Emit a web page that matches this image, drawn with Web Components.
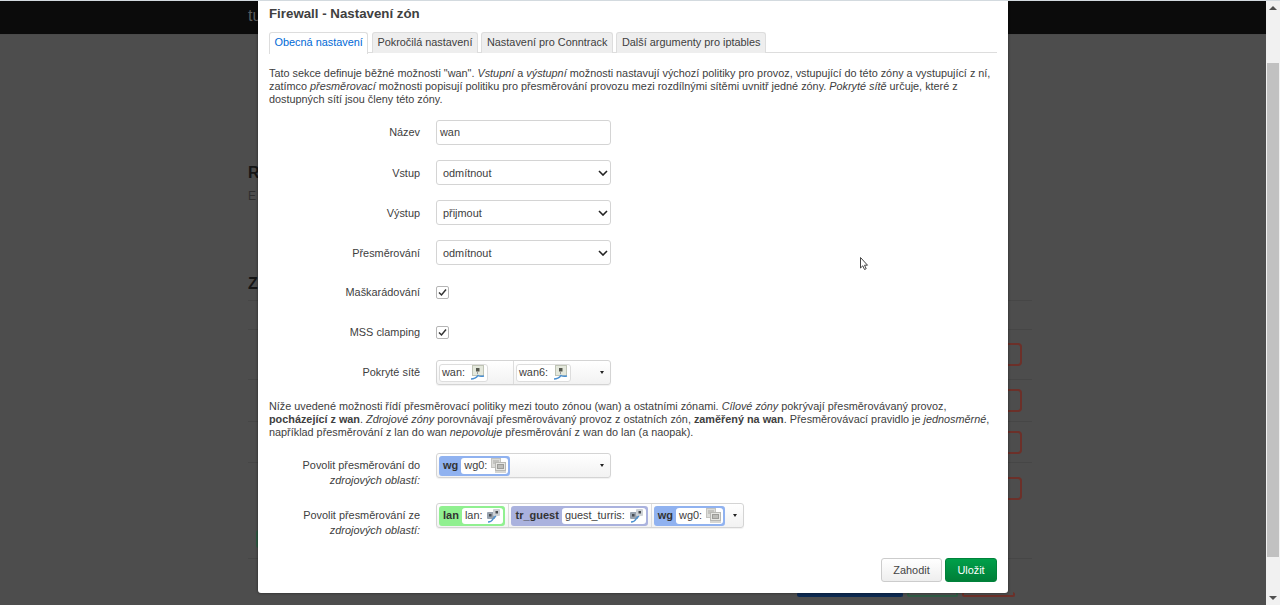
<!DOCTYPE html>
<html lang="cs">
<head>
<meta charset="utf-8">
<title>Firewall - Nastavení zón</title>
<style>
  html, body { margin: 0; height: 100%; overflow: hidden; }
  body { font-family: "Liberation Sans", Arial, sans-serif; font-size: 11px; color: #404040; }
</style>
</head>
<body>
<template id="net-icons">
  <svg id="wan" width="15" height="15" viewBox="0 0 15 15">
    <rect x="2.500" y="0.500" width="11" height="10" fill="#e4e8dc" stroke="#c0c4b6"/>
    <rect x="6" y="3" width="3.500" height="3.500" fill="#55584e"/>
    <path d="M7.500 6.500v2.500" stroke="#999" fill="none"/>
    <path d="M1 14c3 0 5-1 7-3.500 1.500 1 3.500 1 6 .5" stroke="#4b90d0" stroke-width="1.400" fill="none"/>
  </svg>
  <svg id="switch" width="15" height="15" viewBox="0 0 15 15">
    <rect x="1" y="4" width="8" height="7" rx="1" fill="#98a2ae"/>
    <rect x="7" y="1" width="7" height="7" rx="1" fill="#cdd1d5"/>
    <rect x="3" y="6" width="2.500" height="2.500" fill="#4a4e54"/>
    <rect x="9.500" y="3" width="2.500" height="2.500" fill="#4a4e54"/>
    <path d="M2 14c2 0 4-1 5-3l3-3" stroke="#4b90d0" stroke-width="1.400" fill="none"/>
  </svg>
  <svg id="bridge" width="15" height="15" viewBox="0 0 15 15">
    <rect x="0.500" y="0.500" width="9" height="9" fill="#dcdcd9" stroke="#c4c4c0"/>
    <path d="M2 3h6M2 5h6" stroke="#aaaaa6"/>
    <rect x="4.500" y="4.500" width="10" height="8" fill="#e6e6e3" stroke="#b8b8b4"/>
    <rect x="6.500" y="6.500" width="6" height="4" fill="#bcbcb8" stroke="#9c9c98"/>
    <path d="M4 14h11" stroke="#c4c4c0" stroke-width="1.400"/>
  </svg>
</template>

<fw-app>
  <fw-backdrop></fw-backdrop>
  <fw-modal heading="Firewall - Nastavení zón">
    <fw-tabs></fw-tabs>
    <fw-note>Tato sekce definuje běžné možnosti "wan". <em>Vstupní</em> a <em>výstupní</em> možnosti nastavují výchozí politiky pro provoz, vstupující do této zóny a vystupující z ní,<br>zatímco <em>přesměrovací</em> možnosti popisují politiku pro přesměrování provozu mezi rozdílnými sítěmi uvnitř jedné zóny. <em>Pokryté sítě</em> určuje, které z<br>dostupných sítí jsou členy této zóny.</fw-note>
    <fw-row label="Název"><fw-input value="wan"></fw-input></fw-row>
    <fw-row label="Vstup" class="sel"><fw-select value="odmítnout"></fw-select></fw-row>
    <fw-row label="Výstup" class="sel"><fw-select value="přijmout"></fw-select></fw-row>
    <fw-row label="Přesměrování" class="sel"><fw-select value="odmítnout"></fw-select></fw-row>
    <fw-row label="Maškarádování"><fw-check></fw-check></fw-row>
    <fw-row label="MSS clamping"><fw-check></fw-check></fw-row>
    <fw-row label="Pokryté sítě">
      <fw-drop>
        <fw-cell width="72"><fw-net name="wan:" icon="wan"></fw-net></fw-cell>
        <fw-cell><fw-net name="wan6:" icon="wan"></fw-net></fw-cell>
      </fw-drop>
    </fw-row>
    <fw-note class="second">Níže uvedené možnosti řídí přesměrovací politiky mezi touto zónou (wan) a ostatními zónami. <em>Cílové zóny</em> pokrývají přesměrovávaný provoz,<br><strong>pocházející z wan</strong>. <em>Zdrojové zóny</em> porovnávají přesměrovávaný provoz z ostatních zón, <strong>zaměřený na wan</strong>. Přesměrovávací pravidlo je <em>jednosměrné</em>,<br>například přesměrování z lan do wan <em>nepovoluje</em> přesměrování z wan do lan (a naopak).</fw-note>
    <fw-row label="Povolit přesměrování do" sub="zdrojových oblastí:" class="zone-first">
      <fw-drop>
        <fw-cell><fw-zone name="wg" color="#90b2f0"><fw-net name="wg0:" icon="bridge"></fw-net></fw-zone></fw-cell>
      </fw-drop>
    </fw-row>
    <fw-row label="Povolit přesměrování ze" sub="zdrojových oblastí:" class="zone-second">
      <fw-drop auto>
        <fw-cell sep><fw-zone name="lan" color="#90f090"><fw-net name="lan:" icon="switch"></fw-net></fw-zone></fw-cell>
        <fw-cell sep><fw-zone name="tr_guest" color="#aab2de"><fw-net name="guest_turris:" icon="switch"></fw-net></fw-zone></fw-cell>
        <fw-cell><fw-zone name="wg" color="#90b2f0"><fw-net name="wg0:" icon="bridge"></fw-net></fw-zone></fw-cell>
      </fw-drop>
    </fw-row>
    <fw-actions slot="footer"></fw-actions>
  </fw-modal>
  <fw-scrollbar></fw-scrollbar>
  <fw-cursor></fw-cursor>
</fw-app>

<script>
function shadow(el, html) {
  const root = el.attachShadow({ mode: 'open' });
  root.innerHTML = html;
  return root;
}

class FwApp extends HTMLElement {
  constructor() {
    super();
    shadow(this, `
    <style>
      :host { display: flex; height: 605px; width: 1280px; border-top: 1px solid #d3dadf; box-sizing: border-box; position: relative; overflow: hidden; }
    </style>
    <slot></slot>`);
  }
}

// dimmed page behind the dialog, only its edges show
class FwBackdrop extends HTMLElement {
  constructor() {
    super();
    const rows = [[50, 13], [42, 9], [41, 9]];
    shadow(this, `
    <style>
      :host { display: block; flex: 1; min-width: 0; background: #4d4d4d; color: #161616; overflow: hidden; }
      .top { height: 34px; background: #0b0b0b; border-bottom: 1px solid #4a4a4a; box-sizing: border-box; padding: 6px 0 0 248px; color: #5b5b5b; font-size: 16px; line-height: 18px; }
      .wrap { width: 784px; margin-left: 248px; }
      .h { font-size: 16px; font-weight: bold; line-height: 20px; padding-top: 128px; }
      .e { font-size: 12px; line-height: 14px; color: #2f2f2f; padding-top: 6px; }
      .z { font-size: 16px; font-weight: bold; line-height: 20px; padding-top: 71px; padding-bottom: 6px; }
      .head { height: 30px; box-sizing: border-box; border-top: 1px solid #464646; border-bottom: 1px solid #464646; }
      .row { display: flex; justify-content: flex-end; align-items: flex-start; box-sizing: border-box; border-bottom: 1px solid #464646; padding-right: 10px; }
      .btn { flex: none; width: 54px; height: 23px; border: 2px solid #6c3029; border-radius: 4px; box-sizing: border-box; }
      .teal { width: 20px; height: 18px; margin: 53px auto 0 8px; border: 2px solid #2f5a44; border-radius: 3px; box-sizing: border-box; }
      .foot { display: flex; gap: 4px; justify-content: flex-end; padding: 33px 17px 0 0; }
      .foot div { height: 5px; border-radius: 3px; box-sizing: border-box; border: 2px solid #2f5a44; border-top: 0; width: 51px; }
      .foot .blue { width: 106px; background: #0d2a52; border-color: #0d2a52; }
      .foot .red { width: 53px; border-color: #6c3029; }
    </style>
    <div class="top">tu</div>
    <div class="wrap">
      <div class="h">R</div>
      <div class="e">E</div>
      <div class="z">Z</div>
      <div class="head"></div>
      ${rows.map(([h, p]) => `<div class="row" style="height:${h}px;padding-top:${p}px"><div class="btn"></div></div>`).join('')}
      <div class="row" style="height:96px;padding-top:14px"><div class="teal"></div><div class="btn"></div></div>
      <div class="foot"><div class="blue"></div><div></div><div class="red"></div></div>
    </div>`);
  }
}

class FwModal extends HTMLElement {
  constructor() {
    super();
    shadow(this, `
    <style>
      :host { display: block; position: absolute; left: 258px; top: -1px; width: 750px; height: 593px; box-sizing: border-box; background: #fff; border-radius: 0 0 3px 3px; box-shadow: 0 0 3px rgba(0,0,0,.55); padding: 0 11px; }
      h4 { margin: 0; padding-top: 7px; font-size: 13.300px; line-height: 14px; font-weight: bold; color: #404040; height: 25px; }
      .foot { position: absolute; right: 11px; bottom: 11px; }
    </style>
    <h4></h4>
    <slot></slot>
    <div class="foot"><slot name="footer"></slot></div>`);
    this.shadowRoot.querySelector('h4').textContent = this.getAttribute('heading');
  }
}

class FwTabs extends HTMLElement {
  constructor() {
    super();
    const tabs = ['Obecná nastavení', 'Pokročilá nastavení', 'Nastavení pro Conntrack', 'Další argumenty pro iptables'];
    shadow(this, `
    <style>
      :host { display: flex; gap: 3.500px; height: 20px; border-bottom: 1px solid #ddd; font-size: 10.900px; }
      div { background: #eee; border: 1px solid #ddd; border-bottom: 0; border-radius: 3px 3px 0 0; padding: 0 4.500px; line-height: 19px; height: 20px; color: #404040; }
      .on { background: #fff; color: #0069d6; height: 21px; position: relative; }
    </style>
    ${tabs.map((t, i) => `<div class="${i === 0 ? 'on' : ''}">${t}</div>`).join('')}`);
  }
}

class FwNote extends HTMLElement {
  constructor() {
    super();
    shadow(this, `
    <style>
      :host { display: block; font-size: 10.850px; line-height: 13px; color: #404040; padding-top: 14px; height: 53px; white-space: nowrap; }
      :host(.second) { padding-top: 0; }
    </style>
    <slot></slot>`);
  }
}

class FwRow extends HTMLElement {
  constructor() {
    super();
    const sub = this.getAttribute('sub');
    shadow(this, `
    <style>
      :host { display: grid; grid-template-columns: 151px 1fr; column-gap: 16px; align-items: start; height: 25px; margin-bottom: 15px; font-size: 10.900px; line-height: 15px; color: #404040; }
      :host(.zone-first) { margin-bottom: 25px; }
      .l { text-align: right; padding-top: 5px; }
      :host(.sel) .l { padding-top: 6px; }
      em { display: block; }
      .f { display: flex; align-items: center; height: 25px; }
    </style>
    <div class="l">${this.getAttribute('label')}${sub ? `<em>${sub}</em>` : ''}</div>
    <div class="f"><slot></slot></div>`);
  }
}

const FIELD = 'width: 175px; height: 25px; box-sizing: border-box; border: 1px solid #d4d4d4; border-radius: 3px; background: #fff;';

class FwInput extends HTMLElement {
  constructor() {
    super();
    shadow(this, `
    <style>
      :host { display: block; ${FIELD} font-size: 10.900px; line-height: 23px; padding-left: 3px; color: #404040; }
    </style>
    <span></span>`);
    this.shadowRoot.querySelector('span').textContent = this.getAttribute('value');
  }
}

class FwSelect extends HTMLElement {
  constructor() {
    super();
    shadow(this, `
    <style>
      :host { display: flex; align-items: center; justify-content: space-between; ${FIELD} font-size: 10.900px; padding: 1px 2px 0 6px; color: #404040; }
      svg { display: block; }
    </style>
    <span></span>
    <svg width="10" height="6" viewBox="0 0 10 6"><path d="M1 1l4 4 4-4" fill="none" stroke="#222" stroke-width="1.600"/></svg>`);
    this.shadowRoot.querySelector('span').textContent = this.getAttribute('value');
  }
}

class FwCheck extends HTMLElement {
  constructor() {
    super();
    shadow(this, `
    <style>
      :host { display: block; width: 13px; height: 13px; box-sizing: border-box; border: 1px solid #b5b5b5; border-radius: 2px; background: #fff; }
      svg { display: block; }
    </style>
    <svg width="11" height="11" viewBox="0 0 11 11"><path d="M2 5.500l2.500 2.500 4.500-5.500" fill="none" stroke="#333" stroke-width="1.500"/></svg>`);
  }
}

class FwDrop extends HTMLElement {
  constructor() {
    super();
    shadow(this, `
    <style>
      :host { display: flex; ${FIELD} background: linear-gradient(#fff, #f2f2f2); font-size: 10.900px; align-items: stretch; box-shadow: 0 1px 1px rgba(0,0,0,.06); }
      :host([auto]) { width: auto; display: inline-flex; }
      .list { display: flex; flex: 1; align-items: stretch; }
      .arrow { width: 16px; display: flex; align-items: center; justify-content: center; flex: none; margin-left: auto; }
      .arrow i { width: 0; height: 0; border: 2.500px solid transparent; border-top: 3.500px solid #222; border-bottom: 0; display: block; }
    </style>
    <div class="list"><slot></slot></div>
    <div class="arrow"><i></i></div>`);
  }
}

class FwCell extends HTMLElement {
  constructor() {
    super();
    const w = this.getAttribute('width');
    shadow(this, `
    <style>
      :host { display: flex; align-items: center; padding: 0 2px; ${w ? `width: ${w}px; border-right: 1px solid #ddd;` : ''} }
      :host([sep]) { border-right: 1px solid #ddd; padding-right: 3px; }
    </style>
    <slot></slot>`);
  }
}

class FwNet extends HTMLElement {
  constructor() {
    super();
    const icon = document.getElementById('net-icons').content.querySelector('#' + this.getAttribute('icon')).cloneNode(true);
    const root = shadow(this, `
    <style>
      :host { display: inline-flex; align-items: center; gap: 5px; height: 18px; box-sizing: border-box; padding: 0 2px; background: #fff; border: 1px solid #ddd; border-radius: 3px; color: #404040; font-size: 10.900px; white-space: nowrap; }
      svg { display: block; }
    </style>
    <span></span>`);
    root.querySelector('span').textContent = this.getAttribute('name');
    root.appendChild(icon);
  }
}

class FwZone extends HTMLElement {
  constructor() {
    super();
    const color = this.getAttribute('color');
    shadow(this, `
    <style>
      :host { display: inline-flex; align-items: center; height: 20px; box-sizing: border-box; border: 2px solid ${color}; border-radius: 3px; background: ${color}; font-size: 11px; }
      b { padding: 0 3px 0 2px; color: #333; }
      ::slotted(fw-net) { border: 0; height: 16px; padding: 0 2px 0 3px; gap: 4px; }
    </style>
    <b></b><slot></slot>`);
    this.shadowRoot.querySelector('b').textContent = this.getAttribute('name');
  }
}

class FwActions extends HTMLElement {
  constructor() {
    super();
    shadow(this, `
    <style>
      :host { display: flex; gap: 3px; font-size: 10.900px; }
      div { height: 24px; line-height: 22px; box-sizing: border-box; border-radius: 3px; text-align: center; }
      .z { width: 61px; border: 1px solid #ccc; background: linear-gradient(#fff, #eee); color: #444; }
      .u { width: 52px; border: 1px solid #00823a; background: linear-gradient(#00a04a, #007f38); color: #fff; }
    </style>
    <div class="z">Zahodit</div>
    <div class="u">Uložit</div>`);
  }
}

class FwScrollbar extends HTMLElement {
  constructor() {
    super();
    shadow(this, `
    <style>
      :host { display: flex; flex-direction: column; width: 14px; flex: none; background: #f1f1f1; align-items: center; }
      .b { height: 14px; display: flex; align-items: center; justify-content: center; flex: none; width: 100%; }
      i { display: block; width: 0; height: 0; border: 4px solid transparent; }
      .up i { border-bottom: 4px solid #505050; border-top: 0; }
      .down i { border-top: 4px solid #505050; border-bottom: 0; }
      .gap { height: 48px; flex: none; }
      .thumb { height: 494px; width: 12px; background: #c1c1c1; flex: none; }
    </style>
    <div class="b up"><i></i></div>
    <div class="gap"></div>
    <div class="thumb"></div>
    <div style="flex:1"></div>
    <div class="b down"><i></i></div>`);
  }
}

// the mouse pointer caught in the photograph
class FwCursor extends HTMLElement {
  constructor() {
    super();
    shadow(this, `
    <style>
      :host { display: block; position: absolute; left: 859px; top: 256px; width: 10px; height: 15px; }
      svg { display: block; }
    </style>
    <svg width="10" height="15" viewBox="0 0 10 15"><path d="M1.500.500v10.500l2.300-2.200 1.700 3.700 1.700-.8-1.700-3.500h3z" fill="#fff" stroke="#444" stroke-width="1"/></svg>`);
  }
}

customElements.define('fw-app', FwApp);
customElements.define('fw-backdrop', FwBackdrop);
customElements.define('fw-modal', FwModal);
customElements.define('fw-tabs', FwTabs);
customElements.define('fw-note', FwNote);
customElements.define('fw-row', FwRow);
customElements.define('fw-input', FwInput);
customElements.define('fw-select', FwSelect);
customElements.define('fw-check', FwCheck);
customElements.define('fw-drop', FwDrop);
customElements.define('fw-cell', FwCell);
customElements.define('fw-net', FwNet);
customElements.define('fw-zone', FwZone);
customElements.define('fw-actions', FwActions);
customElements.define('fw-scrollbar', FwScrollbar);
customElements.define('fw-cursor', FwCursor);
</script>
</body>
</html>
